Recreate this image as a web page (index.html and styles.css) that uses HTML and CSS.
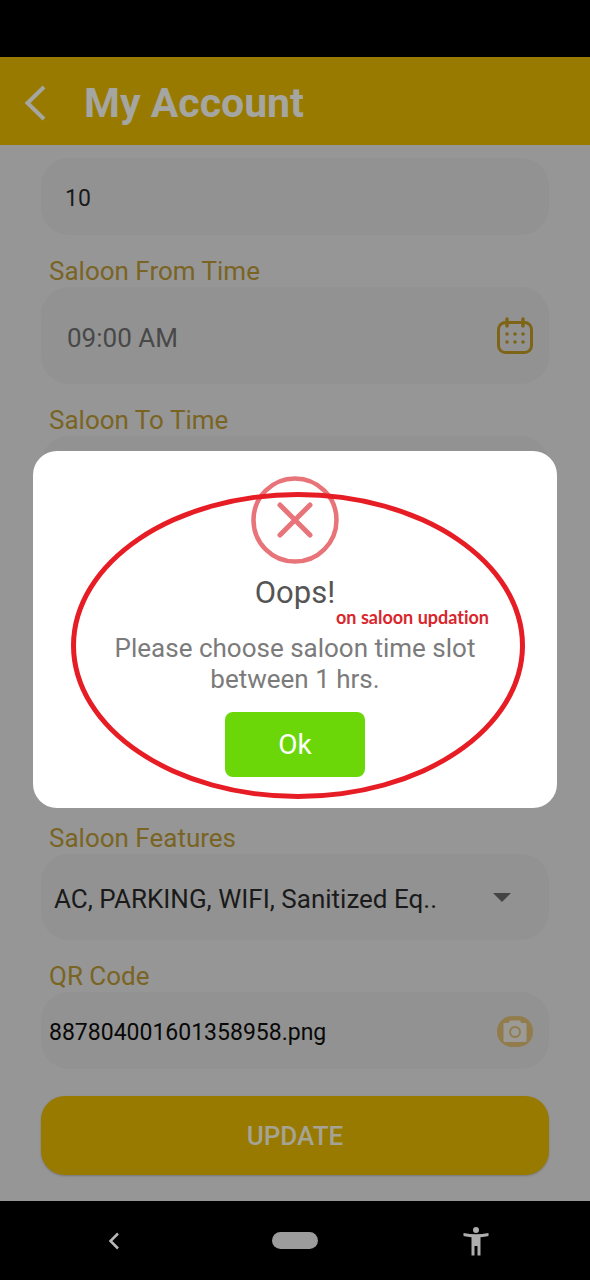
FILE: index.html
```html
<!DOCTYPE html>
<html lang="en">
<head>
<meta charset="utf-8">
<meta name="viewport" content="width=device-width, initial-scale=1">
<title>My Account</title>
<link rel="stylesheet" href="styles.css">
</head>
<body>
<div class="statusbar"></div>
<div class="app">
  <header class="header">
    <button class="header__back" type="button" aria-label="Back">
      <svg width="22" height="36" viewBox="0 0 22 36" fill="none" stroke="currentColor" stroke-width="4"><path d="M20 2 3.500 18 20 34"/></svg>
    </button>
    <h1 class="header__title">My Account</h1>
  </header>

  <form class="form">
    <div class="group">
      <div class="field field--short field--indent">
        <input class="field__input field__input--small" type="text" value="10" aria-label="Number">
      </div>
    </div>
    <div class="group">
      <label class="group__label" for="from">Saloon From Time</label>
      <div class="field field--tall field--indent">
        <input class="field__input field__input--muted" id="from" type="text" value="09:00 AM">
        <svg class="field__icon" width="38" height="38" viewBox="0 0 38 38" fill="none" stroke="#7d6417" stroke-width="3">
          <rect x="2.500" y="5.500" width="33" height="30" rx="7"/>
          <path d="M11 2v7M27 2v7" stroke-linecap="round" stroke-width="3.500"/>
          <path d="M11 17h.01M19 17h.01M27 17h.01M11 25h.01M19 25h.01M27 25h.01" stroke-linecap="round" stroke-width="3.500"/>
        </svg>
      </div>
    </div>
    <div class="group group--grow">
      <label class="group__label" for="to">Saloon To Time</label>
      <div class="field field--tall field--indent">
        <input class="field__input field__input--muted" id="to" type="text">
      </div>
    </div>
    <div class="group">
      <label class="group__label" for="features">Saloon Features</label>
      <div class="field field--medium">
        <select class="field__input field__select" id="features"><option>AC, PARKING, WIFI, Sanitized Eq..</option></select>
        <svg class="field__caret" width="18" height="9" viewBox="0 0 18 9"><path d="M0 0h18L9 9z" fill="#444"/></svg>
      </div>
    </div>
    <div class="group">
      <label class="group__label" for="qr">QR Code</label>
      <div class="field field--short">
        <input class="field__input field__input--small field__input--dark" id="qr" type="text" value="887804001601358958.png">
        <svg class="field__icon" width="38" height="34" viewBox="0 0 38 34">
          <rect x="1" y="2" width="36" height="31" rx="15" fill="#927c4b"/>
          <path d="M8.500 9h4l1.500-2.500h10L25.500 9h4q1 0 1 1v17q0 1-1 1h-21q-1 0-1-1V10q0-1 1-1z" fill="#9b9a97"/>
          <circle cx="19" cy="18" r="5" fill="none" stroke="#927c4b" stroke-width="2"/>
        </svg>
      </div>
    </div>
    <button class="update" type="button">UPDATE</button>
  </form>

  <div class="overlay">
    <div class="dialog" role="alertdialog" aria-labelledby="dialog-title" aria-describedby="dialog-text">
      <svg width="88" height="88" viewBox="0 0 88 88" fill="none" stroke="#e87378">
        <circle cx="44" cy="44" r="41.500" stroke-width="4.500"/>
        <path d="M29 29l30 30M59 29 29 59" stroke-width="5" stroke-linecap="round"/>
      </svg>
      <h2 class="dialog__title" id="dialog-title">Oops!</h2>
      <p class="dialog__text" id="dialog-text">Please choose saloon time slot between 1 hrs.</p>
      <button class="dialog__ok" type="button">Ok</button>
      <div class="marker"></div>
      <span class="note">on saloon updation</span>
    </div>
  </div>
</div>
<nav class="navbar">
  <button class="navbar__button" type="button" aria-label="Back">
    <svg width="14" height="18" viewBox="0 0 14 18" fill="none" stroke="#b8b8b8" stroke-width="2.500"><path d="M11 1.500 3.500 9l7.500 7.500"/></svg>
  </button>
  <button class="navbar__button" type="button" aria-label="Home"><span class="navbar__pill"></span></button>
  <button class="navbar__button" type="button" aria-label="Accessibility">
    <svg width="26" height="30" viewBox="0 0 26 30" fill="#adadad"><circle cx="13" cy="4" r="3"/><path d="M.5 7Q13 9.500 25.500 7v3q-4 .8-8 1.200V29.500h-3V20h-3v9.500h-3V11.200Q4.500 10.800.5 10z"/></svg>
  </button>
</nav>
</body>
</html>
```

FILE: styles.css
```css
* {
  box-sizing: border-box;
}

body {
  margin: 0;
  min-height: 100vh;
  display: flex;
  flex-direction: column;
  background: #000;
  font-family: Roboto, "Liberation Sans", sans-serif;
}

button,
input,
select {
  font: inherit;
  border: 0;
  padding: 0;
  background: none;
}

.statusbar {
  height: 57px;
}

.app {
  position: relative;
  flex: 1;
  display: flex;
  flex-direction: column;
  background: #969696;
}

.header {
  display: flex;
  align-items: center;
  gap: 38px;
  height: 88px;
  padding: 4px 24px 0;
  background: #997a00;
  color: #a5a5a2;
}

.header__back {
  display: flex;
  color: inherit;
}

.header__title {
  margin: 0;
  font-size: 41px;
  line-height: 48px;
  font-weight: 700;
}

.form {
  flex: 1;
  display: flex;
  flex-direction: column;
  gap: 20px;
  padding: 13px 41px 26px;
}

.group--grow {
  flex: 1;
}

.group__label {
  display: block;
  padding-left: 8px;
  font-size: 26px;
  line-height: 32px;
  color: #7a6424;
}

.field {
  position: relative;
  display: flex;
  align-items: center;
  padding: 0 15px 0 8px;
  border-radius: 28px;
  background: #929292;
}

.field--indent {
  padding-left: 24px;
}

.field--short {
  height: 77px;
}

.field--medium {
  height: 86px;
  padding-left: 13px;
}

.field--tall {
  height: 97px;
}

.field__input {
  flex: 1;
  min-width: 0;
  padding-top: 4px;
  font-size: 26px;
  line-height: 32px;
  color: #1a1a1a;
}

.field__input--small {
  font-size: 23px;
}

.field__input--dark {
  color: #080808;
}

.field__input--muted {
  padding-left: 2px;
  color: #484848;
}

.field__select {
  appearance: none;
}

.field__icon {
  flex: none;
}

.field__caret {
  position: absolute;
  right: 38px;
  pointer-events: none;
}

.update {
  height: 79px;
  margin-top: 7px;
  border-radius: 24px;
  background: #997a00;
  box-shadow: 0 1px 2px #777;
  color: #a5a396;
  font-size: 26px;
  font-weight: 500;
}

.overlay {
  position: absolute;
  inset: 0;
  display: flex;
  align-items: center;
  justify-content: center;
  padding: 0 33px;
}

.dialog {
  position: relative;
  flex: 1;
  display: flex;
  flex-direction: column;
  align-items: center;
  padding: 25px 64px 31px;
  border-radius: 24px;
  background: #fff;
}

.dialog__title {
  margin: 9px 0 20px;
  font-size: 31px;
  line-height: 40px;
  font-weight: 400;
  color: #555;
}

.dialog__text {
  margin: 0 0 17px;
  font-size: 26px;
  line-height: 31px;
  text-align: center;
  color: #7b7b7b;
}

.dialog__ok {
  width: 140px;
  height: 65px;
  border-radius: 8px;
  background: #6bd709;
  color: #fff;
  font-size: 28px;
}

.marker {
  position: absolute;
  inset: 41px 32px 9px 38px;
  border: 5px solid #e71d25;
  border-radius: 50%;
  pointer-events: none;
}

.note {
  position: absolute;
  top: 156px;
  right: 68px;
  font-family: Lato, sans-serif;
  font-size: 18px;
  line-height: 20px;
  font-weight: 700;
  font-variant-ligatures: none;
  color: #d9252c;
}

.navbar {
  display: grid;
  grid-template-columns: 1fr 1fr 1fr;
  align-items: center;
  height: 79px;
  padding: 0 24px;
}

.navbar__button {
  display: flex;
  justify-content: center;
}

.navbar__pill {
  width: 46px;
  height: 17px;
  border-radius: 9px;
  background: #9c9c9c;
}
```
